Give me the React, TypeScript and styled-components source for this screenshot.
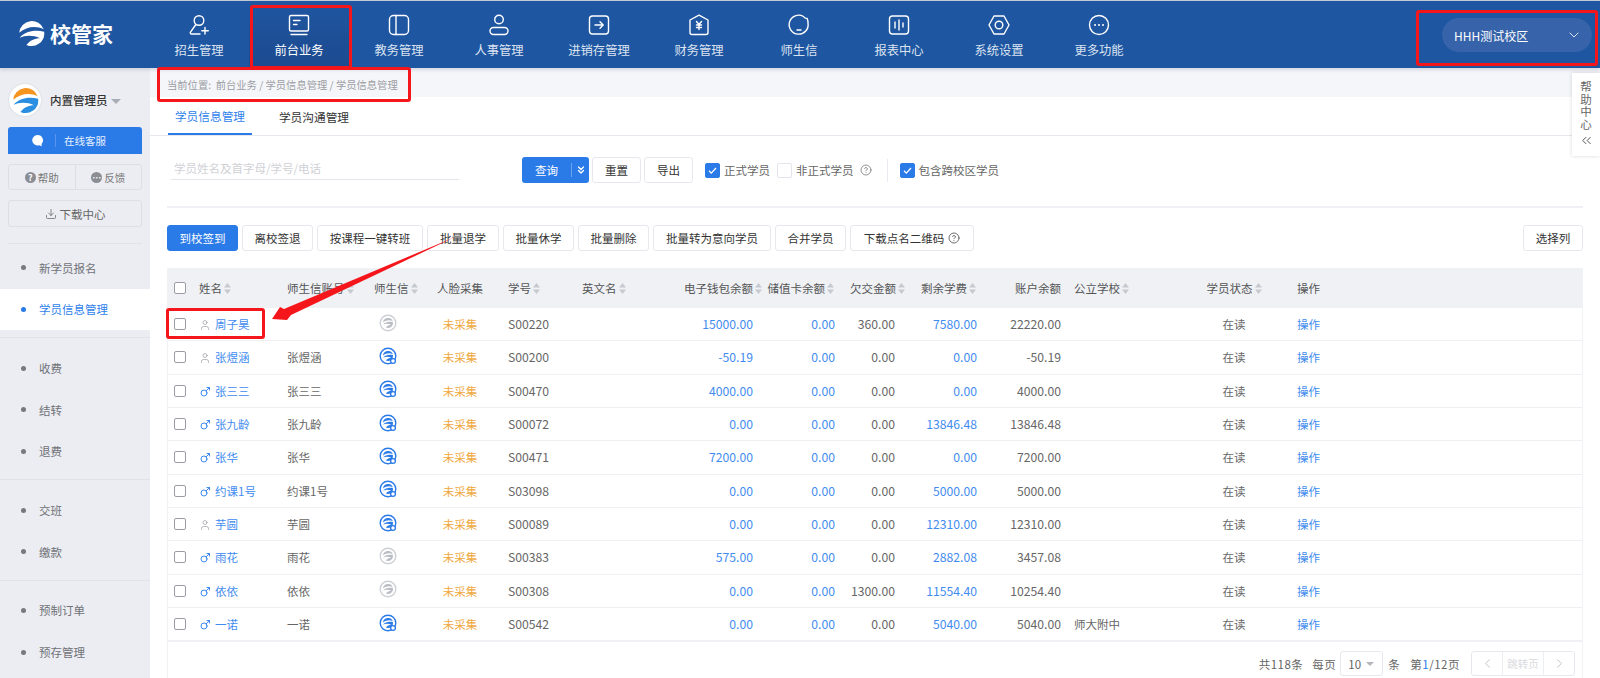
import React from 'react';
import styled, { createGlobalStyle } from 'styled-components';
import { ChevronDown, ChevronLeft, ChevronRight, ChevronsDown, ChevronsLeft, CircleHelp, Download, Mars, User } from 'lucide-react';

const GlobalStyle = createGlobalStyle`
  html, body {
    margin: 0;
    padding: 0;
    height: 678px;
    overflow: hidden;
    background: #fff;
    font-family: "Noto Sans CJK SC", "Noto Sans", sans-serif;
    font-size: 11.5px;
    color: #666;
  }
  * { box-sizing: border-box; }
`;

const Page = styled.div`
  position: relative;
  width: 1600px;
  height: 678px;
  overflow: hidden;
`;

const RedMark = styled.div<{ $l: number; $t: number; $w: number; $h: number }>`
  position: absolute;
  left: ${p => p.$l}px;
  top: ${p => p.$t}px;
  width: ${p => p.$w}px;
  height: ${p => p.$h}px;
  border: 3px solid #f5161c;
  border-radius: 3px;
  pointer-events: none;
  z-index: 5;
`;

const ArrowLayer = styled.svg`
  position: absolute;
  left: 0;
  top: 0;
  z-index: 6;
  pointer-events: none;
`;

// top bar
const TopBar = styled.header`
  display: flex;
  height: 68px;
  background: #1f56a1;
  border-top: 1px solid #c3c9d4;
  box-shadow: 0 2px 3px rgba(120, 130, 150, 0.25);
  position: relative;
  z-index: 2;
`;

const Logo = styled.div`
  width: 149px;
  display: flex;
  align-items: center;
  padding: 0 0 2px 18px;
  gap: 5px;
  color: #fff;
  font-size: 21px;
  font-weight: 700;
  line-height: 1;
  white-space: nowrap;
`;

const Nav = styled.nav`
  display: flex;
`;

const NavItem = styled.div<{ $active?: boolean }>`
  position: relative;
  width: 100px;
  display: flex;
  flex-direction: column;
  align-items: center;
  padding-top: 12px;
  color: ${p => (p.$active ? '#fff' : '#dbe4f1')};
  font-size: 12.3px;
  line-height: 16px;
  background: ${p => (p.$active ? 'linear-gradient(180deg, #1f56a1 0%, #1c4a8f 100%)' : 'transparent')};
`;

const NavIcon = styled.svg`
  width: 24px;
  height: 24px;
  margin-bottom: 5px;
  fill: none;
  stroke: #fff;
  stroke-width: 1.4;
  stroke-linecap: round;
  stroke-linejoin: round;
`;

const Campus = styled.div`
  position: relative;
  align-self: flex-start;
  margin: 17px 8px 0 auto;
  width: 150px;
  height: 34px;
  border-radius: 17px;
  background: #3663a9;
  color: #fff;
  font-size: 12px;
  display: flex;
  align-items: center;
  justify-content: space-between;
  padding: 0 10px 0 12px;
`;

// layout
const Body = styled.div`
  display: flex;
  height: 610px;
`;

const Side = styled.aside`
  width: 150px;
  flex: none;
  background: #ebedf2;
  display: flex;
  flex-direction: column;
  & > * { flex: none; }
`;

const Profile = styled.div`
  display: flex;
  align-items: center;
  height: 59px;
  padding: 5px 0 0 9px;
  color: #333;
  font-weight: 500;
`;

const Avatar = styled.div`
  width: 32px;
  height: 32px;
  border-radius: 50%;
  background: #fff;
  display: flex;
  align-items: center;
  justify-content: center;
  margin-right: 9px;
  box-shadow: 0 0 2px rgba(0, 0, 0, 0.15);
`;

const Caret = styled.i`
  width: 0;
  height: 0;
  margin: 2px 0 0 3px;
  border-left: 5px solid transparent;
  border-right: 5px solid transparent;
  border-top: 5px solid #a9adb6;
`;

const ServiceBtn = styled.div`
  margin: 0 8px;
  height: 27px;
  background: #2a7ae8;
  border-radius: 3px 3px 0 0;
  color: #e6f0ff;
  font-size: 10.5px;
  display: flex;
  align-items: center;
  padding-left: 23px;
`;

const ServiceSep = styled.span`
  width: 1px;
  height: 13px;
  background: #5795ee;
  margin: 0 8px 0 11px;
`;

const ButtonPair = styled.div`
  display: flex;
  margin: 10px 8px 0;
  height: 26px;
  border: 1px solid #dcdfe6;
  border-radius: 3px;
`;

const PairItem = styled.div`
  flex: 1;
  display: flex;
  align-items: center;
  justify-content: center;
  gap: 2px;
  font-size: 10.5px;
  color: #777;
  & + & { border-left: 1px solid #dcdfe6; }
`;

const RoundGlyph = styled.span`
  width: 11px;
  height: 11px;
  border-radius: 50%;
  background: #8b8d94;
  color: #fff;
  font-size: 9px;
  font-weight: 700;
  line-height: 11px;
  text-align: center;
`;

const DownloadBtn = styled.div`
  margin: 10px 8px 0;
  height: 27px;
  border: 1px solid #dcdfe6;
  border-radius: 3px;
  display: flex;
  align-items: center;
  justify-content: center;
  gap: 3px;
  color: #666;
`;

const MenuGroup = styled.div<{ $top: number }>`
  padding: ${p => p.$top}px 0 7px;
  border-top: 1px solid #e0e2e8;
`;

const FirstGroup = styled(MenuGroup)`
  border-top: 0;
`;

const FirstRule = styled.div`
  margin: 16px 8px 0;
  height: 1px;
  background: #e0e2e8;
`;

const MenuItem = styled.div<{ $active?: boolean }>`
  height: 41.67px;
  display: flex;
  align-items: center;
  padding-left: 21px;
  gap: 13px;
  font-size: 11.5px;
  color: ${p => (p.$active ? '#2f7fec' : '#707278')};
  background: ${p => (p.$active ? '#fff' : 'transparent')};
  &::before {
    content: '';
    width: 5px;
    height: 5px;
    border-radius: 50%;
    background: ${p => (p.$active ? '#2a7ae8' : '#77797f')};
  }
`;

const Main = styled.main`
  flex: 1;
  min-width: 0;
  position: relative;
`;

const Crumb = styled.div`
  position: relative;
  height: 29px;
  padding: 4px 0 0 17px;
  background: #f5f6fa;
  color: #9b9da3;
  font-size: 10.3px;
  display: flex;
  align-items: center;
  white-space: pre;
`;

const HelpTab = styled.div`
  position: absolute;
  top: 5px;
  right: 0;
  width: 28px;
  height: 83px;
  background: #fff;
  box-shadow: 0 0 4px rgba(0, 0, 0, 0.15);
  display: flex;
  flex-direction: column;
  align-items: center;
  padding-top: 8px;
  color: #666;
  z-index: 3;
`;

const HelpText = styled.span`
  writing-mode: vertical-rl;
  text-orientation: upright;
  font-size: 11.5px;
  line-height: 14px;
  letter-spacing: 1.1px;
  margin-bottom: 2px;
`;

const Tabs = styled.div`
  height: 39px;
  display: flex;
  border-bottom: 1px solid #e6e8ee;
  padding-left: 18px;
`;

const Tab = styled.div<{ $active?: boolean }>`
  width: 84px;
  height: 38px;
  margin-right: 20px;
  display: flex;
  align-items: center;
  justify-content: center;
  font-size: 11.7px;
  color: ${p => (p.$active ? '#2f7fec' : '#333')};
  border-bottom: ${p => (p.$active ? '2px solid #2a7ae8' : '0')};
`;

const Content = styled.div`
  padding: 21px 17px 0;
`;

const FilterRow = styled.div`
  display: flex;
  align-items: center;
  height: 26px;
`;

const SearchBox = styled.div`
  align-self: flex-start;
  width: 288px;
  height: 23px;
  margin: 0 63px 0 4px;
  padding-left: 3px;
  border-bottom: 1px solid #e3e5ea;
  color: #cfd1d6;
  font-size: 11.5px;
  line-height: 22px;
`;

const QueryBtn = styled.div`
  width: 67px;
  height: 26px;
  margin-right: 3px;
  border-radius: 3px;
  background: #2a7ae8;
  color: #fff;
  font-size: 11.5px;
  display: flex;
  align-items: center;
  padding-left: 13px;
`;

const QuerySep = styled.span`
  width: 1px;
  height: 14px;
  margin: 0 3px 0 13px;
  background: #6aa2f0;
`;

const PlainBtn = styled.div<{ $w: number; $mr?: number }>`
  width: ${p => p.$w}px;
  height: 26px;
  flex: none;
  margin-right: ${p => p.$mr ?? 0}px;
  border: 1px solid #e6e8ee;
  border-radius: 3px;
  background: #fff;
  color: #333;
  font-size: 11.5px;
  display: flex;
  align-items: center;
  justify-content: center;
  gap: 4px;
`;

const CheckLabel = styled.label`
  display: flex;
  align-items: center;
  gap: 4px;
  color: #666;
  font-size: 11.5px;
  margin-right: 7px;
`;

const CheckMark = styled.span<{ $on?: boolean }>`
  width: 15px;
  height: 15px;
  border-radius: 2px;
  background: ${p => (p.$on ? '#2a7ae8' : '#fff')};
  border: 1px solid ${p => (p.$on ? '#2a7ae8' : '#e3e5ea')};
  display: flex;
  align-items: center;
  justify-content: center;
`;

const HelpHint = styled(CircleHelp)`
  margin-left: 2px;
`;

const FilterSep = styled.span`
  width: 1px;
  height: 23px;
  background: #e8eaef;
  margin: 0 12px 0 8px;
`;

const Rule = styled.div`
  height: 2px;
  margin-top: 23px;
  background: #f0f1f6;
`;

const ActionBar = styled.div`
  display: flex;
  justify-content: flex-start;
  gap: 4px;
  margin-top: 17px;
`;

const PrimaryBtn = styled(PlainBtn)`
  background: #2a7ae8;
  border-color: #2a7ae8;
  color: #fff;
`;

const ChooseBtn = styled(PlainBtn)`
  margin-left: auto;
`;

const Table = styled.div`
  margin-top: 17px;
  height: 411px;
  border-left: 1px solid #f1f2f6;
  border-right: 1px solid #f1f2f6;
`;

const columns = '27px 88px 87px 62px 72px 74px 82px 103px 82px 60px 82px 83px 105px 118px 1fr';

const HeadRow = styled.div`
  display: grid;
  grid-template-columns: ${columns};
  height: 40px;
  background: #eff1f5;
  color: #555;
  font-size: 11.5px;
  align-items: center;
  white-space: nowrap;
`;

const Row = styled.div`
  position: relative;
  display: grid;
  grid-template-columns: ${columns};
  height: 33.33px;
  border-bottom: 1px solid #eff0f4;
  align-items: center;
  white-space: nowrap;
  font-size: 11.5px;
  color: #666;
`;

const LastRowRule = styled.div`
  height: 2px;
  margin-top: -1px;
  background: #f0f1f6;
`;

const Cell = styled.div<{ $align?: 'left' | 'right' | 'center'; $pl?: number; $pr?: number; $link?: boolean; $warn?: boolean; $num?: boolean }>`
  display: flex;
  align-items: center;
  justify-content: ${p => (p.$align === 'right' ? 'flex-end' : p.$align === 'center' ? 'center' : 'flex-start')};
  padding-left: ${p => p.$pl ?? 0}px;
  padding-right: ${p => p.$pr ?? 0}px;
  font-size: ${p => (p.$num ? '12.2px' : 'inherit')};
  color: ${p => (p.$warn ? '#efa840' : p.$link ? '#3f8bef' : 'inherit')};
`;

const BoxCheck = styled.span`
  width: 12px;
  height: 12px;
  margin-left: 6px;
  border: 1.5px solid #9d9ca6;
  border-radius: 2px;
  background: #fff;
`;

const GenderSlot = styled.span`
  width: 12px;
  height: 14px;
  margin-top: 2px;
  flex: none;
  display: flex;
  align-items: center;
  justify-content: center;
`;

const NameLink = styled.span`
  color: #3f8bef;
  margin-left: 4px;
`;

const SortMark = styled.svg`
  width: 7px;
  height: 11px;
  margin-left: 2px;
  flex: none;
  fill: #c6c9d0;
`;

const BadgeIcon = styled.svg`
  width: 18px;
  height: 18px;
  margin: -3px 0 0 9px;
  fill: none;
`;

const Pager = styled.div`
  display: flex;
  align-items: center;
  justify-content: flex-end;
  height: 25px;
  margin: 9px 7px 0 0;
  color: #666;
  font-size: 11.5px;
`;

const PagerText = styled.span<{ $mr: number }>`
  margin-right: ${p => p.$mr}px;
  letter-spacing: 0.5px;
`;

const PageNo = styled.b`
  font-weight: 400;
  color: #2a7ae8;
`;

const SizeSelect = styled.div`
  width: 43px;
  height: 25px;
  margin-right: 5px;
  border: 1px solid #e6e8ee;
  border-radius: 3px;
  display: flex;
  align-items: center;
  padding-left: 7px;
  gap: 5px;
`;

const SizeCaret = styled.i`
  width: 0;
  height: 0;
  border-left: 4px solid transparent;
  border-right: 4px solid transparent;
  border-top: 4px solid #b5b7bd;
`;

const PagerBox = styled.div`
  display: flex;
  width: 104px;
  height: 25px;
  border: 1px solid #e6e8ee;
  border-radius: 3px;
`;

const PagerArrow = styled.div`
  width: 30px;
  display: flex;
  align-items: center;
  justify-content: center;
  color: #b5b7bd;
`;

const PagerJump = styled.div`
  flex: 1;
  display: flex;
  align-items: center;
  justify-content: center;
  color: #d9dade;
  font-size: 10.5px;
  border-left: 1px solid #eceef2;
  border-right: 1px solid #eceef2;
`;

// brand mark: cap on top, wave band that wraps round into the lower bowl
const CAP_PATH = 'M1.5 15A15 15 0 0 1 30.5 11C22 6.500 10 7.500 1.500 15Z';
const WAVE_PATH = 'M2 21C8 13.500 20 11 31 14A15 15 0 0 1 10 29.500C14 24 20 21.500 26 21.500 18 17.500 8 18 2 21Z';

function Swirl({ size, top, low }: { size: number; top: string; low: string }) {
  return (
    <svg width={size} height={size} viewBox="0 0 32 32">
      <path d={CAP_PATH} fill={top} />
      <path d={WAVE_PATH} fill={low} />
    </svg>
  );
}

function LinkBadge({ on }: { on: boolean }) {
  const c = on ? '#2a7ae8' : '#cdd0d6';
  const inner = on ? '#2a7ae8' : '#b9bcc3';
  return (
    <BadgeIcon viewBox="0 0 18 18">
      <circle cx="9" cy="9" r="7.8" stroke={c} strokeWidth="1.400" />
      <g transform="translate(3.500 3.500) scale(0.34)">
        <path d={CAP_PATH} fill={inner} />
        <path d={WAVE_PATH} fill={inner} />
      </g>
      {on && <circle cx="14" cy="14" r="2.400" fill="#fff" stroke={c} strokeWidth="1.300" />}
    </BadgeIcon>
  );
}

const navItems: { label: string; icon: React.ReactNode }[] = [
  {
    label: '招生管理',
    icon: (
      <>
        <circle cx="12" cy="7.500" r="4.800" />
        <path d="M8.500 12 3.500 19.200c-.6 1 0 1.800 1 1.800H13" />
        <path d="M18 14.500v6.500M14.800 17.800h6.500" />
      </>
    ),
  },
  {
    label: '前台业务',
    icon: (
      <>
        <rect x="2.500" y="2.500" width="19" height="15.500" rx="1.500" />
        <path d="M6.500 7.500h6.500M6.500 11.500h3.500M4 21.500h16" />
      </>
    ),
  },
  {
    label: '教务管理',
    icon: (
      <>
        <rect x="2.500" y="2.500" width="19" height="19" rx="4" />
        <path d="M9 2.500v19" />
      </>
    ),
  },
  {
    label: '人事管理',
    icon: (
      <>
        <circle cx="12" cy="6.500" r="4.300" />
        <rect x="3" y="14.500" width="18" height="7" rx="3.500" />
      </>
    ),
  },
  {
    label: '进销存管理',
    icon: (
      <>
        <rect x="2.500" y="3" width="19" height="18" rx="3" />
        <path d="M8 12h8M13 8.800l3.200 3.200-3.200 3.200" />
      </>
    ),
  },
  {
    label: '财务管理',
    icon: (
      <>
        <path d="M12 2.200 21 7v12.500a2 2 0 0 1-2 2H5a2 2 0 0 1-2-2V7Z" />
        <path d="m9.500 8.500 2.500 3 2.500-3M9.500 12h5M9.500 14.500h5M12 12v4.500" />
      </>
    ),
  },
  {
    label: '师生信',
    icon: (
      <>
        <path d="M16.500 3.500A9.500 9.500 0 1 0 21 10c0-1.500-.2-3-.8-4.500-1.200.1-2.700-.4-3.700-2Z" />
        <path d="M10 17h4" />
      </>
    ),
  },
  {
    label: '报表中心',
    icon: (
      <>
        <rect x="2.500" y="3" width="19" height="18" rx="3" />
        <path d="M8 9v6M12 7v10M16 10v4" />
      </>
    ),
  },
  {
    label: '系统设置',
    icon: (
      <>
        <path d="M7 3h10l5 9-5 9H7l-5-9Z" />
        <circle cx="12" cy="12" r="3.800" />
      </>
    ),
  },
  {
    label: '更多功能',
    icon: (
      <>
        <circle cx="12" cy="12" r="9.500" />
        <path d="M8 12h.01M12 12h.01M16 12h.01" strokeWidth="2" />
      </>
    ),
  },
];

interface Student {
  name: string;
  male: boolean;
  account: string;
  linked: boolean;
  no: string;
  wallet: string;
  due: string;
  remain: string;
  balance: string;
  school?: string;
}

const students: Student[] = [
  { name: '周子昊', male: false, account: '', linked: false, no: 'S00220', wallet: '15000.00', due: '360.00', remain: '7580.00', balance: '22220.00' },
  { name: '张煜涵', male: false, account: '张煜涵', linked: true, no: 'S00200', wallet: '-50.19', due: '0.00', remain: '0.00', balance: '-50.19' },
  { name: '张三三', male: true, account: '张三三', linked: true, no: 'S00470', wallet: '4000.00', due: '0.00', remain: '0.00', balance: '4000.00' },
  { name: '张九龄', male: true, account: '张九龄', linked: true, no: 'S00072', wallet: '0.00', due: '0.00', remain: '13846.48', balance: '13846.48' },
  { name: '张华', male: true, account: '张华', linked: true, no: 'S00471', wallet: '7200.00', due: '0.00', remain: '0.00', balance: '7200.00' },
  { name: '约课1号', male: true, account: '约课1号', linked: true, no: 'S03098', wallet: '0.00', due: '0.00', remain: '5000.00', balance: '5000.00' },
  { name: '芋圆', male: false, account: '芋圆', linked: true, no: 'S00089', wallet: '0.00', due: '0.00', remain: '12310.00', balance: '12310.00' },
  { name: '雨花', male: true, account: '雨花', linked: false, no: 'S00383', wallet: '575.00', due: '0.00', remain: '2882.08', balance: '3457.08' },
  { name: '依依', male: true, account: '依依', linked: false, no: 'S00308', wallet: '0.00', due: '1300.00', remain: '11554.40', balance: '10254.40' },
  { name: '一诺', male: true, account: '一诺', linked: true, no: 'S00542', wallet: '0.00', due: '0.00', remain: '5040.00', balance: '5040.00', school: '师大附中' },
];

const Sort = () => (
  <SortMark viewBox="0 0 7 11">
    <path d="M3.500 0 7 4.500H0ZM3.500 11 0 6.500h7Z" />
  </SortMark>
);

const Tick = () => (
  <svg width="11" height="11" viewBox="0 0 11 11" fill="none" stroke="#fff" strokeWidth="1.300">
    <path d="m2 5.800 2.300 2.300L9 3" />
  </svg>
);

const App: React.FC = () => {
  return (
    <Page>
      <GlobalStyle />
      <TopBar>
        <Logo>
          <Swirl size={27} top="#fff" low="#fff" />
          校管家
        </Logo>
        <Nav>
          {navItems.map(item => (
            <NavItem key={item.label} $active={item.label === '前台业务'}>
              <NavIcon viewBox="0 0 24 24">{item.icon}</NavIcon>
              {item.label}
              {item.label === '前台业务' && <RedMark $l={1} $t={4} $w={102} $h={64} />}
            </NavItem>
          ))}
        </Nav>
        <Campus>
          HHH测试校区
          <ChevronDown size={16} strokeWidth={1.5} color="#dbe4f1" />
          <RedMark $l={-26} $t={-8} $w={182} $h={56} />
        </Campus>
      </TopBar>
      <Body>
        <Side>
          <Profile>
            <Avatar>
              <Swirl size={27} top="#f5941f" low="#2a8fe0" />
            </Avatar>
            内置管理员
            <Caret />
          </Profile>
          <ServiceBtn>
            <svg width="13" height="13" viewBox="0 0 13 13">
              <path d="M6.500 1a5.300 5.300 0 1 0 1.800 10.300l2.500 1-.3-2.300A5.300 5.300 0 0 0 6.500 1Z" fill="#fff" />
            </svg>
            <ServiceSep />
            在线客服
          </ServiceBtn>
          <ButtonPair>
            <PairItem>
              <RoundGlyph>?</RoundGlyph>
              帮助
            </PairItem>
            <PairItem>
              <RoundGlyph>…</RoundGlyph>
              反馈
            </PairItem>
          </ButtonPair>
          <DownloadBtn>
            <Download size={12} strokeWidth={1.5} />
            下载中心
          </DownloadBtn>
          <FirstRule />
          <FirstGroup $top={3}>
            <MenuItem>新学员报名</MenuItem>
            <MenuItem $active>学员信息管理</MenuItem>
          </FirstGroup>
          <MenuGroup $top={9}>
            <MenuItem>收费</MenuItem>
            <MenuItem>结转</MenuItem>
            <MenuItem>退费</MenuItem>
          </MenuGroup>
          <MenuGroup $top={9}>
            <MenuItem>交班</MenuItem>
            <MenuItem>缴款</MenuItem>
          </MenuGroup>
          <MenuGroup $top={9}>
            <MenuItem>预制订单</MenuItem>
            <MenuItem>预存管理</MenuItem>
          </MenuGroup>
        </Side>
        <Main>
          <Crumb>
            当前位置:  前台业务 / 学员信息管理 / 学员信息管理
            <RedMark $l={7} $t={-1} $w={254} $h={35} />
          </Crumb>
          <HelpTab>
            <HelpText>帮助中心</HelpText>
            <ChevronsLeft size={15} strokeWidth={1.6} color="#555" />
          </HelpTab>
          <Tabs>
            <Tab $active>学员信息管理</Tab>
            <Tab>学员沟通管理</Tab>
          </Tabs>
          <Content>
            <FilterRow>
              <SearchBox>学员姓名及首字母/学号/电话</SearchBox>
              <QueryBtn>
                查询
                <QuerySep />
                <ChevronsDown size={12} strokeWidth={2.6} />
              </QueryBtn>
              <PlainBtn $w={49} $mr={3}>重置</PlainBtn>
              <PlainBtn $w={49} $mr={12}>导出</PlainBtn>
              <CheckLabel>
                <CheckMark $on><Tick /></CheckMark>
                正式学员
              </CheckLabel>
              <CheckLabel>
                <CheckMark />
                非正式学员
                <HelpHint size={12} strokeWidth={1.4} />
              </CheckLabel>
              <FilterSep />
              <CheckLabel>
                <CheckMark $on><Tick /></CheckMark>
                包含跨校区学员
              </CheckLabel>
            </FilterRow>
            <Rule />
            <ActionBar>
              <PrimaryBtn $w={71}>到校签到</PrimaryBtn>
              <PlainBtn $w={71}>离校签退</PlainBtn>
              <PlainBtn $w={106}>按课程一键转班</PlainBtn>
              <PlainBtn $w={72}>批量退学</PlainBtn>
              <PlainBtn $w={71}>批量休学</PlainBtn>
              <PlainBtn $w={71}>批量删除</PlainBtn>
              <PlainBtn $w={118}>批量转为意向学员</PlainBtn>
              <PlainBtn $w={71}>合并学员</PlainBtn>
              <PlainBtn $w={124}>
                下载点名二维码
                <CircleHelp size={12} strokeWidth={1.4} />
              </PlainBtn>
              <ChooseBtn $w={60}>选择列</ChooseBtn>
            </ActionBar>
            <Table>
              <HeadRow>
                <Cell><BoxCheck /></Cell>
                <Cell $pl={4}>姓名<Sort /></Cell>
                <Cell $pl={4}>师生信账号<Sort /></Cell>
                <Cell $pl={4}>师生信<Sort /></Cell>
                <Cell $align="center" $pr={16}>人脸采集</Cell>
                <Cell $pl={4}>学号<Sort /></Cell>
                <Cell $pl={4}>英文名<Sort /></Cell>
                <Cell $align="right" $pr={1}>电子钱包余额<Sort /></Cell>
                <Cell $align="right" $pr={11}>储值卡余额<Sort /></Cell>
                <Cell $align="right">欠交金额<Sort /></Cell>
                <Cell $align="right" $pr={11}>剩余学费<Sort /></Cell>
                <Cell $align="right" $pr={9}>账户余额</Cell>
                <Cell $pl={4}>公立学校<Sort /></Cell>
                <Cell $align="center">学员状态<Sort /></Cell>
                <Cell $pl={4}>操作</Cell>
              </HeadRow>
              {students.map((s, i) => (
                <Row key={s.no}>
                  <Cell><BoxCheck /></Cell>
                  <Cell $pl={4}>
                    <GenderSlot>
                      {s.male ? (
                        <Mars size={12} strokeWidth={2} color="#3f8bef" />
                      ) : (
                        <User size={14} strokeWidth={1.4} color="#9a9ba1" />
                      )}
                    </GenderSlot>
                    <NameLink>{s.name}</NameLink>
                  </Cell>
                  <Cell $pl={4}>{s.account}</Cell>
                  <Cell><LinkBadge on={s.linked} /></Cell>
                  <Cell $align="center" $pr={16} $warn>未采集</Cell>
                  <Cell $pl={4} $num>{s.no}</Cell>
                  <Cell />
                  <Cell $align="right" $pr={10} $link $num>{s.wallet}</Cell>
                  <Cell $align="right" $pr={10} $link $num>0.00</Cell>
                  <Cell $align="right" $pr={10} $num>{s.due}</Cell>
                  <Cell $align="right" $pr={10} $link $num>{s.remain}</Cell>
                  <Cell $align="right" $pr={9} $num>{s.balance}</Cell>
                  <Cell $pl={4}>{s.school}</Cell>
                  <Cell $align="center">在读</Cell>
                  <Cell $pl={4} $link>操作</Cell>
                  {i === 0 && <RedMark $l={-2} $t={0} $w={99} $h={31} />}
                </Row>
              ))}
              <LastRowRule />
              <Pager>
                <PagerText $mr={9}>共118条</PagerText>
                <PagerText $mr={4}>每页</PagerText>
                <SizeSelect>10<SizeCaret /></SizeSelect>
                <PagerText $mr={10}>条</PagerText>
                <PagerText $mr={11}>第<PageNo>1</PageNo>/12页</PagerText>
                <PagerBox>
                  <PagerArrow><ChevronLeft size={15} strokeWidth={1.3} /></PagerArrow>
                  <PagerJump>跳转页</PagerJump>
                  <PagerArrow><ChevronRight size={15} strokeWidth={1.3} /></PagerArrow>
                </PagerBox>
              </Pager>
            </Table>
          </Content>
        </Main>
      </Body>
      <ArrowLayer width="1600" height="678" viewBox="0 0 1600 678">
        <polygon points="455,237 284,309 280,307 272,319 287,320 291,315" fill="#f5161c" />
      </ArrowLayer>
    </Page>
  );
};

export default App;
